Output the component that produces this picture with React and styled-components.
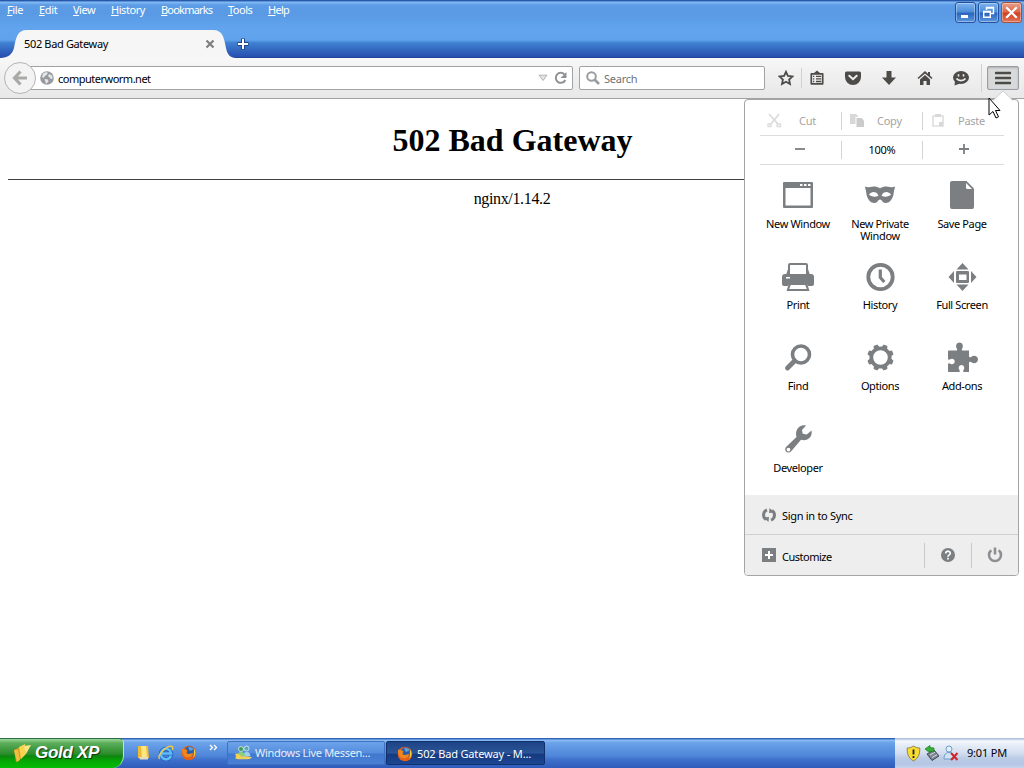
import React from 'react';
import styled, { createGlobalStyle } from 'styled-components';

const GlobalStyle = createGlobalStyle`
  * {
    box-sizing: border-box;
  }
  html, body {
    margin: 0;
    padding: 0;
    overflow: hidden;
  }
  svg {
    display: block;
    flex: none;
  }
`;

const Desktop = styled.div`
  position: relative;
  display: flex;
  flex-direction: column;
  width: 1024px;
  height: 768px;
  background: #fff;
  color: #000;
  font: 11px/13px 'Noto Sans', 'Open Sans', sans-serif;
  letter-spacing: -0.25px;
  white-space: nowrap;
  cursor: default;
`;

/* ---------- title bar and tabs ---------- */

const TitleBar = styled.header`
  display: flex;
  flex-direction: column;
  justify-content: space-between;
  height: 58px;
  background: linear-gradient(
    #1f4f9f 0, #2f65b5 1px, #86bdf6 2px, #5c9ce6 5px, #5a9ae4 14px,
    #62a5ee 30px, #60a2ec 40px, #3f7fd0 43px, #3a76ca 46px, #2d5cb8 53px, #2850ae 57px, #1c3c8c 58px
  );
`;

const TitleRow = styled.div`
  display: flex;
  justify-content: space-between;
  height: 24px;
`;

const MenuBar = styled.nav`
  display: flex;
  gap: 16px;
  padding: 3px 0 0 7px;
  color: #fff;
`;

const MenuItem = styled.div`
  width: ${({ $w }) => $w}px;
  letter-spacing: ${({ $ls }) => $ls}px;

  &::first-letter {
    text-decoration: underline;
  }
`;

const WindowButtons = styled.div`
  display: flex;
  gap: 2px;
  padding: 2px 2px 0 0;
`;

const WindowButton = styled.button`
  display: flex;
  align-items: center;
  justify-content: center;
  width: 21px;
  height: 21px;
  padding: 0;
  border: 1px solid ${({ $close }) => ($close ? '#a3503f' : '#25509c')};
  border-radius: 3px;
  box-shadow: inset 0 0 0 1px rgba(255, 255, 255, 0.35);
  background: ${({ $close }) => ($close
    ? 'linear-gradient(#e9a08c, #dd6a4c 45%, #cf4422 55%, #e0745a)'
    : 'linear-gradient(#7db3ee, #4f8fdc 45%, #2c66bd 55%, #5b97de)')};
`;

const TabStrip = styled.div`
  display: flex;
  height: 28px;
`;

const Tab = styled.div`
  position: relative;
  display: flex;
  align-items: center;
  justify-content: space-between;
  width: 236px;
  padding: 0 21px 0 24px;
`;

const TabShape = styled.svg`
  position: absolute;
  left: 0;
  top: 0;
`;

const TabTitle = styled.span`
  position: relative;
  padding-bottom: 2px;
  letter-spacing: -0.35px;
`;

const TabClose = styled.svg`
  position: relative;
`;

const NewTab = styled.div`
  padding: 8px 0 0 1px;
`;

/* ---------- toolbar ---------- */

const Toolbar = styled.div`
  display: flex;
  align-items: center;
  height: 41px;
  padding: 0 5px 1px 4px;
  border-bottom: 1px solid #a3a3a3;
  background: linear-gradient(#f8f8f8, #f1f0f0 40%, #e9e8e8);
`;

const BackButton = styled.div`
  display: flex;
  align-items: center;
  justify-content: center;
  width: 32px;
  height: 32px;
  margin-right: -7px;
  z-index: 1;
  border: 1px solid #b4b4b4;
  border-radius: 50%;
  background: #f3f3f3;
`;

const Field = styled.div`
  display: flex;
  align-items: center;
  width: ${({ $w }) => $w}px;
  height: 24px;
  margin-right: 6px;
  padding: ${({ $pad }) => $pad};
  border: 1px solid #a0a2a4;
  border-radius: 2px;
  background: #fff;
`;

const Address = styled.span`
  flex: 1;
  padding: 2px 0 0 4px;
  letter-spacing: -0.5px;
`;

const SearchHint = styled.span`
  padding: 2px 0 0 4px;
  color: #6f7275;
`;

const ToolbarButtons = styled.div`
  display: flex;
  align-items: center;
  margin-left: 6px;
`;

const ToolButton = styled.div`
  display: flex;
  justify-content: center;
  width: ${({ $w }) => $w || 36}px;
  margin-right: ${({ $right }) => $right || 0}px;
`;

const ToolDivider = styled.div`
  width: 1px;
  height: ${({ $h }) => $h}px;
  margin-left: ${({ $left }) => $left}px;
  background: #d0d0d0;
`;

const MenuButton = styled.div`
  display: flex;
  align-items: center;
  justify-content: center;
  width: 32px;
  height: 24px;
  margin-left: auto;
  border: 1px solid #9a9ea4;
  border-radius: 2px;
  box-shadow: inset 0 1px 2px rgba(0, 0, 0, 0.2);
  background: #d8d9db;
`;

/* ---------- page ---------- */

const Page = styled.main`
  flex: 1;
  padding: 0 8px;
  text-align: center;
  font: 16px/18px 'Liberation Serif', serif;
  letter-spacing: 0;
`;

const PageTitle = styled.h1`
  margin: 23px 0 20px 1px;
  font-size: 32px;
  line-height: 37px;
`;

const PageRule = styled.hr`
  margin: 0 0 10px;
  border: 0;
  border-top: 1px solid #404040;
`;

const Server = styled.div`
  letter-spacing: -0.35px;
`;

/* ---------- application menu ---------- */

const Panel = styled.aside`
  position: absolute;
  left: 744px;
  top: 99px;
  width: 275px;
  height: 477px;
  display: flex;
  flex-direction: column;
  border: 1px solid #a2a4a6;
  border-radius: 4px;
  background: #fff;
`;

const PanelArrow = styled.svg`
  position: absolute;
  left: 247px;
  top: -10px;
`;

const EditRows = styled.div`
  display: flex;
  flex-direction: column;
  margin: 7px 14px 0 15px;
`;

const EditRow = styled.div`
  display: grid;
  grid-template-columns: 81px 81px 82px;
  align-items: center;
  height: 29px;
  border-bottom: 1px solid #dcdcdc;
`;

const EditCell = styled.div`
  display: flex;
  align-items: center;
  justify-content: ${({ $center }) => ($center ? 'center' : 'flex-start')};
  gap: ${({ $gap }) => $gap || 0}px;
  height: 18px;
  padding: 0 0 2px ${({ $left }) => $left || 0}px;
  border-left: 1px solid ${({ $first }) => ($first ? 'transparent' : '#d4d4d4')};
  color: ${({ $off }) => ($off ? '#a4a4a4' : '#000')};
`;

const Actions = styled.div`
  display: grid;
  flex: none;
  grid-template-columns: repeat(3, 82px);
  grid-auto-rows: 81.2px;
  height: 316px;
  margin: 14px 0 0 12px;
`;

const Action = styled.div`
  display: flex;
  flex-direction: column;
  align-items: center;
  gap: 7px;
  text-align: center;
  line-height: 12px;
  letter-spacing: -0.38px;
  white-space: pre;
`;

const Footer = styled.div`
  display: flex;
  flex: none;
  align-items: center;
  height: 40px;
  padding-left: 17px;
  background: #eee;
  border-bottom: ${({ $line }) => ($line ? '1px solid #d0d0d0' : '0')};
  border-radius: ${({ $line }) => ($line ? '0' : '0 0 3px 3px')};
`;

const FooterLabel = styled.span`
  flex: 1;
  padding: 2px 0 0 6px;
  letter-spacing: ${({ $ls }) => $ls || -0.3}px;
`;

const FooterButton = styled.div`
  display: flex;
  align-items: center;
  justify-content: center;
  width: 47px;
  height: 25px;
  border-left: 1px solid #c8c8c8;
`;

/* ---------- task bar ---------- */

const TaskBar = styled.footer`
  display: flex;
  height: 30px;
  background: linear-gradient(
    #2a58a8 0, #3a6fc4 1px, #8cbcf2 2px, #6aa2ea 5px, #5a92e0 12px, #4f86d9 18px, #3c6fcb 22px, #2f5cba 30px
  );
`;

const StartButton = styled.div`
  display: flex;
  align-items: center;
  gap: 3px;
  width: 124px;
  padding: 0 0 2px 13px;
  border-top: 1px solid #2d6a4a;
  border-right: 1px solid #c0e4c4;
  border-radius: 0 5px 12px 0;
  background: linear-gradient(#9ad79a 0, #5dae5c 4px, #3f9a40 10px, #2c8c2c 15px, #0d860d 17px, #05a805 22px, #04bc04 100%);
  color: #fff;
  font: italic bold 17px/26px 'Liberation Sans', Arial, sans-serif;
  letter-spacing: -0.3px;
  text-shadow: 1px 1px 1px rgba(0, 0, 0, 0.6);
`;

const QuickLaunch = styled.div`
  display: flex;
  align-items: center;
  gap: 7px;
  width: 103px;
  padding-left: 11px;
`;

const Chevrons = styled.svg`
  margin: -11px 0 0 5px;
`;

const TaskButton = styled.div`
  display: flex;
  align-items: center;
  gap: ${({ $active }) => ($active ? 4 : 3)}px;
  width: ${({ $active }) => ($active ? 159 : 158)}px;
  height: 24px;
  margin: 3px 1px 0 0;
  padding: ${({ $active }) => ($active ? '1px 0 0 10px' : '0 0 1px 7px')};
  border: 1px solid ${({ $active }) => ($active ? '#12306e' : '#3f71c2')};
  border-radius: 2px;
  color: ${({ $active }) => ($active ? '#fff' : '#e6effb')};
  letter-spacing: ${({ $active }) => ($active ? -0.15 : -0.3)}px;
  background: ${({ $active }) => ($active
    ? 'linear-gradient(#1d4385, #2a5598 50%, #153a80 56%, #1c4691)'
    : 'linear-gradient(#6da3ea, #568ddc 48%, #4079cf 56%, #4a80d4)')};
`;

const Tray = styled.div`
  display: flex;
  align-items: center;
  gap: 3px;
  width: 129px;
  margin-left: auto;
  padding: 0 0 0 11px;
  background: linear-gradient(#9fb6d8 0, #f4f7fc 3px, #e4ebf6 8px, #d3def0 15px, #bccce6 20px, #b4c6e4 26px, #c6d4ec 30px);
`;

const Clock = styled.span`
  margin: 0 0 1px 5px;
  letter-spacing: -0.2px;
`;

const Pointer = styled.svg`
  position: absolute;
  left: 988px;
  top: 97px;
`;

/* ---------- icons ---------- */

const GREY = '#7c7f82';
const DARK = '#4d4b48';

const Icon = ({ w = 32, h = 32, children }) => (
  <svg width={w} height={h} viewBox={`0 0 ${w} ${h}`} fill="none">
    {children}
  </svg>
);

const NewWindowIcon = () => (
  <Icon>
    <path fill={GREY} fillRule="evenodd" d="M2 3h28a1 1 0 0 1 1 1v24a1 1 0 0 1-1 1H2a1 1 0 0 1-1-1V4a1 1 0 0 1 1-1zM3.500 9v17.500h25V9z" />
    <path fill="#fff" d="M18 5h2.500v2H18zM22 5h2.500v2H22zM26 5h2.500v2H26z" />
  </Icon>
);

const MaskIcon = () => (
  <Icon>
    <path
      fill={GREY}
      fillRule="evenodd"
      d="M1 7.500c2 .8 3.500.9 5 .5 3.500-1 7-.6 10 1.300 3-1.900 6.500-2.300 10-1.300 1.500.4 3 .3 5-.5-.2 2-1 3.500-1.200 6-.5 5.500-3.600 10.500-8.300 10.500-3 0-3.700-3.500-5.500-3.500S13.500 24 10.500 24C5.800 24 2.700 19 2.200 13.500 2 11 1.200 9.500 1 7.500zM5 15.500c2 2.300 6.500 2.800 9.500 1.200-1-2.600-3-3.700-5-3.700-1.800 0-3.300 1-4.500 2.500zM27 15.500c-1.200-1.500-2.700-2.500-4.500-2.500-2 0-4 1.100-5 3.700 3 1.600 7.500 1.100 9.500-1.200z"
    />
  </Icon>
);

const SavePageIcon = () => (
  <Icon>
    <path fill={GREY} d="M6 2h14.500L28 9.500V28a2 2 0 0 1-2 2H6a2 2 0 0 1-2-2V4a2 2 0 0 1 2-2z" />
    <path fill="#fff" d="M20 4l6 6h-4.500a1.500 1.500 0 0 1-1.500-1.500z" />
  </Icon>
);

const PrintIcon = () => (
  <Icon>
    <path fill={GREY} d="M3 14h26a3 3 0 0 1 3 3v7a2 2 0 0 1-2 2H2a2 2 0 0 1-2-2v-7a3 3 0 0 1 3-3z" />
    <path fill={GREY} fillRule="evenodd" d="M8 3h16a2 2 0 0 1 2 2v4l2 6H4l2-6V5a2 2 0 0 1 2-2zM8 5v9.500h16V5z" />
    <path fill="#fff" d="M4 17h4v1.500H4zM7 24h18l2 4.500H5z" />
    <path fill={GREY} fillRule="evenodd" d="M7 23h18l2.500 8h-23zM8.800 25l-1.600 4h17.600l-1.600-4z" />
  </Icon>
);

const HistoryIcon = () => (
  <Icon>
    <circle cx="16.500" cy="17" r="12.200" stroke={GREY} strokeWidth="3.800" />
    <path d="M16.300 9.500v8l4 4.500" stroke={GREY} strokeWidth="3.200" />
  </Icon>
);

const FullScreenIcon = () => (
  <Icon>
    <path fill={GREY} d="M16.500 3l6 6.500h-12zM16.500 31l6-6.500h-12zM2.500 17l5.500-6v12zM30.500 17l-5.500-6v12z" />
    <path fill={GREY} fillRule="evenodd" d="M11 11h11a1 1 0 0 1 1 1v10a1 1 0 0 1-1 1H11a1 1 0 0 1-1-1V12a1 1 0 0 1 1-1zM13 14.500V20h7.500v-5.500z" />
  </Icon>
);

const FindIcon = () => (
  <Icon>
    <circle cx="19" cy="13.500" r="8.500" stroke={GREY} strokeWidth="3.600" />
    <path d="M12.500 20l-7 7" stroke={GREY} strokeWidth="4.800" strokeLinecap="round" />
  </Icon>
);

const OptionsIcon = () => (
  <Icon>
    <circle cx="16.500" cy="16.500" r="9.200" stroke={GREY} strokeWidth="3.800" />
    {[22.5, 67.5, 112.5, 157.5, 202.5, 247.5, 292.5, 337.5].map((a) => (
      <path key={a} d="M14.500 6l.5-2h3l.5 2z" fill={GREY} stroke={GREY} strokeWidth="1.500" strokeLinejoin="round" transform={`rotate(${a} 16.500 16.500)`} />
    ))}
  </Icon>
);

const AddonsIcon = () => (
  <Icon>
    <path
      fill={GREY}
      d="M3 9.500h7.500c1 0 .8-1.400.2-2.200C9.300 5 10.500 1.500 13.500 1.500s4.200 3.500 2.800 5.800c-.6.800-.8 2.200.2 2.200H23v5.500c0 1.500 1.500 1.600 2.500.7 2.300-1.900 6.500-.7 6.500 2.800s-4.200 4.700-6.500 2.800c-1-.9-2.500-.8-2.500.7v9h-5c-1.200 0-1-1.500-.3-2.300 1.300-1.700.3-4.700-2.200-4.700s-3.500 3-2.200 4.700c.7.800.9 2.300-.3 2.300H3c-.6 0-1-.4-1-1v-7c0-1 1.500-1 2.300-.3C6 24 8.700 23 8.700 20.500S6 17 4.300 18.300C3.500 19 2 19 2 18v-7.500c0-.6.4-1 1-1z"
    />
  </Icon>
);

const DeveloperIcon = () => (
  <Icon>
    <path
      fill={GREY}
      fillRule="evenodd"
      d="M24 2.500l-4 4.500.7 3.700 4 .8 4.800-4c1.300 6.500-4 11-10.500 9.300L9 28.500c-3.500 3-7.500-.8-5-4.500L14.500 14C12.500 7 17.500 1 24 2.500zM6.500 24.700a1.900 1.900 0 1 0 0 3.800 1.900 1.900 0 0 0 0-3.800z"
    />
  </Icon>
);

const TOOL_ICONS = {
  star: <path d="M8 1.800l1.900 4.100 4.500.5-3.300 3.100.9 4.500L8 11.800 4 14l.9-4.500L1.600 6.400l4.500-.5z" stroke={DARK} strokeWidth="1.800" />,
  list: (
    <>
      <path d="M2.300 3.900h11.400v9.900H2.300z" stroke={DARK} strokeWidth="1.700" strokeLinejoin="round" />
      <path fill={DARK} d="M4.500 3.500L8 .5l3.500 3z" />
      <path d="M4 6.300h1.300M7 6.300h5.200M4 8.900h1.300M7 8.900h5.200M4 11.500h1.300M7 11.500h5.200" stroke={DARK} strokeWidth="1.300" />
    </>
  ),
  pocket: (
    <>
      <path fill={DARK} d="M1.500 1.500h13a1.500 1.500 0 0 1 1.500 1.500v4a8 8 0 0 1-16 0V3a1.500 1.500 0 0 1 1.500-1.500z" />
      <path d="M4.300 5.700L8 9.200l3.700-3.500" stroke="#f0f0f0" strokeWidth="2" strokeLinecap="round" />
    </>
  ),
  download: <path fill={DARK} d="M5.500 1h5v6.500H15L8 15 1 7.500h4.500z" />,
  home: <path fill={DARK} d="M8 1l3 2.800V2h2v3.600L15.500 8l-1 1L8 3.500 1.500 9l-1-1zM8 5l5 4.500V15H9.500v-4h-3v4H3V9.500z" />,
  chat: (
    <>
      <ellipse cx="8" cy="7.500" rx="8" ry="6.500" fill={DARK} />
      <path fill={DARK} d="M2 11l-.5 4.500L7 13.500z" />
      <path d="M3.500 8.500c2 2.800 7 2.800 9 0" stroke="#f0f0f0" strokeWidth="1.700" />
      <path d="M5.500 4.300v2.200M10.500 4.300v2.200" stroke="#f0f0f0" strokeWidth="1.600" />
    </>
  ),
};

const FirefoxIcon = () => (
  <Icon w={16} h={16}>
    <circle cx="8" cy="8" r="7.300" fill="#e2601c" />
    <circle cx="8.500" cy="6.500" r="5" fill="#2a5ba8" />
    <path d="M7 2.500c2-1.300 5 0 5.500 2L9 6z" fill="#5ba6e0" />
    <path d="M1 4c1-.5 2 .5 4 .5 1.500 0 2 1 1 2-1 .8 0 2.500 1.500 2.500 2 0 3-1 4.500-1 0 3-3 5-6 4.300C2.500 11.500 1 8 1 4z" fill="#f0861e" />
    <path d="M13 3.500c2.200 3 1.800 7-.8 9 .9-2 .8-3.500.6-5z" fill="#f9cf3a" />
  </Icon>
);

const MessengerIcon = () => (
  <Icon w={17} h={16}>
    <circle cx="6" cy="4" r="2.500" fill="#3f9a5c" stroke="#d5eeda" strokeWidth=".8" />
    <circle cx="11.500" cy="3.500" r="2.500" fill="#5ba8b8" stroke="#dceffa" strokeWidth=".8" />
    <path d="M8 12c0-4 2-5 4-5s3 1.500 3.500 4z" fill="#9fd0f0" />
    <path d="M1.500 12c0-3.500 2.500-5 4.500-5s4 2 4.500 4z" fill="#8ad07c" />
    <path d="M0 9c3-2 5 2 8 2.500 3 .4 6-.5 9 1-3 2.500-6 1.500-9 1.700-3 .2-5 .3-8-1 1.500-1.200 1-3 0-4.200z" fill="#f3cf55" />
  </Icon>
);

const MENUS = [
  { name: 'File', w: 16, ls: -0.35 },
  { name: 'Edit', w: 18, ls: -0.35 },
  { name: 'View', w: 22, ls: -0.5 },
  { name: 'History', w: 34, ls: -0.45 },
  { name: 'Bookmarks', w: 51, ls: -0.8 },
  { name: 'Tools', w: 24, ls: -0.5 },
  { name: 'Help', w: 22, ls: -0.7 },
];

const ACTIONS = [
  { label: 'New Window', icon: <NewWindowIcon /> },
  { label: 'New Private\nWindow', icon: <MaskIcon /> },
  { label: 'Save Page', icon: <SavePageIcon /> },
  { label: 'Print', icon: <PrintIcon /> },
  { label: 'History', icon: <HistoryIcon /> },
  { label: 'Full Screen', icon: <FullScreenIcon /> },
  { label: 'Find', icon: <FindIcon /> },
  { label: 'Options', icon: <OptionsIcon /> },
  { label: 'Add-ons', icon: <AddonsIcon /> },
  { label: 'Developer', icon: <DeveloperIcon /> },
];

const Header = () => (
  <TitleBar>
    <TitleRow>
      <MenuBar>
        {MENUS.map(({ name, w, ls }) => <MenuItem key={name} $w={w} $ls={ls}>{name}</MenuItem>)}
      </MenuBar>
      <WindowButtons>
        <WindowButton aria-label="Minimize">
          <Icon w={15} h={15}><path fill="#fff" d="M3 10h7v3H3z" /></Icon>
        </WindowButton>
        <WindowButton aria-label="Restore">
          <Icon w={15} h={15}>
            <path d="M5.500 5V2.500h7v6H10M5 3h8" stroke="#fff" strokeWidth="1.400" />
            <path d="M2.700 6.500h6.600v5.800H2.700zM2 7h8" stroke="#fff" strokeWidth="1.400" />
          </Icon>
        </WindowButton>
        <WindowButton $close aria-label="Close">
          <Icon w={15} h={15}><path d="M3 3l9 9M12 3l-9 9" stroke="#fff" strokeWidth="2.200" strokeLinecap="square" /></Icon>
        </WindowButton>
      </WindowButtons>
    </TitleRow>
    <TabStrip>
      <Tab>
        <TabShape width="236" height="28" viewBox="0 0 236 28">
          <path fill="#f6f6f6" d="M0 28c8-.5 12-3 14-10C16 8 17 0 27 0h186c10 0 11 8 13 18 1.500 7 4 9.500 10 10z" />
        </TabShape>
        <TabTitle>502 Bad Gateway</TabTitle>
        <TabClose width="10" height="10" viewBox="0 0 10 10">
          <path d="M1.500 1.500l7 7M8.500 1.500l-7 7" stroke="#7f7f7f" strokeWidth="2.200" />
        </TabClose>
      </Tab>
      <NewTab>
        <Icon w={12} h={12}>
          <path d="M6 .5v11M.5 6h11" stroke="#1f4488" strokeWidth="4" />
          <path d="M6 1v10M1 6h10" stroke="#fff" strokeWidth="2" />
        </Icon>
      </NewTab>
    </TabStrip>
  </TitleBar>
);

const NavBar = () => (
  <Toolbar>
    <BackButton>
      <Icon w={16} h={16}><path d="M8.500 1.500L2.500 8l6 6.500M3 8h12" stroke="#a9a9a6" strokeWidth="3.200" /></Icon>
    </BackButton>
    <Field $w={544} $pad="0 4px 0 10px">
      <Icon w={14} h={14}>
        <circle cx="7" cy="7" r="6.800" fill="#969a9e" />
        <path fill="#e4e5e6" d="M3 2.500l3-1.500 2 1-1.500 2L5 5 3.500 7 2 6zM9 3l3 1.500.8 3L11 8 9.500 6.500 8 5zM4.500 8L8 8.500l.5 2L6 13z" />
      </Icon>
      <Address>computerworm.net</Address>
      <Icon w={10} h={8}><path d="M1 1.200h8L5 6.500z" fill="#e4e4e4" stroke="#b2b2b2" /></Icon>
      <Icon w={20} h={14}>
        <path d="M16.500 3.500A5 5 0 1 0 17.300 9" stroke="#8f9396" strokeWidth="2" />
        <path d="M18.500 1v6h-6z" fill="#8f9396" />
      </Icon>
    </Field>
    <Field $w={186} $pad="0 0 0 6px">
      <Icon w={14} h={14}>
        <circle cx="5.500" cy="5.500" r="4.300" stroke="#9a9da0" strokeWidth="2" />
        <path d="M8.500 8.500L13 13" stroke="#9a9da0" strokeWidth="2.600" />
      </Icon>
      <SearchHint>Search</SearchHint>
    </Field>
    <ToolbarButtons>
      <ToolButton $w={18}><Icon w={16} h={16}>{TOOL_ICONS.star}</Icon></ToolButton>
      <ToolDivider $h={20} $left={6} />
      <ToolButton $w={30} $right={3}><Icon w={16} h={16}>{TOOL_ICONS.list}</Icon></ToolButton>
      {['pocket', 'download', 'home', 'chat'].map((name) => (
        <ToolButton key={name}><Icon w={16} h={16}>{TOOL_ICONS[name]}</Icon></ToolButton>
      ))}
      <ToolDivider $h={28} $left={2} />
    </ToolbarButtons>
    <MenuButton>
      <Icon w={16} h={14}><path d="M1 2h14M1 7h14M1 12h14" stroke={DARK} strokeWidth="2.600" strokeLinecap="round" /></Icon>
    </MenuButton>
  </Toolbar>
);

const AppMenu = () => (
  <Panel>
    <PanelArrow width="22" height="11" viewBox="0 0 22 11">
      <path d="M1 10.500l10-9.500 10 9.500" fill="#fff" stroke="#c4c4c4" strokeWidth=".8" />
      <path d="M2 11h18v-1H2z" fill="#fff" />
    </PanelArrow>
    <EditRows>
      <EditRow>
        <EditCell $first $off $left={6} $gap={17}>
          <Icon w={15} h={15}>
            <path d="M2 1l9 10M12 1L4 11" stroke="#dcdcdc" strokeWidth="1.800" />
            <path d="M1 11h3v2.500H1zM10 11h3.500v2.500H10z" stroke="#dcdcdc" strokeWidth="1.300" />
          </Icon>
          Cut
        </EditCell>
        <EditCell $off $left={8} $gap={13}>
          <Icon w={14} h={14}><path fill="#d8d8d8" d="M0 1h6l2 2v1H5.500v7H0z" /><path fill="#cbcbcb" d="M6.500 5h5l2.500 2.500V14H6.500z" /></Icon>
          Copy
        </EditCell>
        <EditCell $off $left={9} $gap={14}>
          <Icon w={12} h={14}><path d="M1 3h10v10H1z" stroke="#dedede" strokeWidth="1.600" /><path fill="#d8d8d8" d="M3 1h6v3H3zM7 9h4v4H7z" /></Icon>
          Paste
        </EditCell>
      </EditRow>
      <EditRow>
        <EditCell $first $center><Icon w={12} h={10}><path d="M0 5h10" stroke={GREY} strokeWidth="1.800" /></Icon></EditCell>
        <EditCell $center>100%</EditCell>
        <EditCell $center><Icon w={10} h={10}><path d="M0 5h10M5 0v10" stroke={GREY} strokeWidth="1.800" /></Icon></EditCell>
      </EditRow>
    </EditRows>
    <Actions>
      {ACTIONS.map(({ label, icon }) => (
        <Action key={label}>{icon}{label}</Action>
      ))}
    </Actions>
    <Footer $line>
      <Icon w={14} h={14}>
        <path d="M5 1.800A5.500 5.500 0 0 0 4 11.500M9 12.200A5.500 5.500 0 0 0 10 2.500" stroke={GREY} strokeWidth="3" />
        <path fill={GREY} d="M1.500 9.500L7 9l-.5 5zM12.500 4.500L7 5l.5-5z" />
      </Icon>
      <FooterLabel>Sign in to Sync</FooterLabel>
    </Footer>
    <Footer>
      <Icon w={14} h={14}><path fill={GREY} d="M0 0h14v14H0z" /><path d="M7 3v8M3 7h8" stroke="#fff" strokeWidth="2" /></Icon>
      <FooterLabel $ls={-0.5}>Customize</FooterLabel>
      <FooterButton>
        <Icon w={14} h={14}>
          <circle cx="7" cy="7" r="7" fill={GREY} />
          <path d="M4.700 5.400c0-3 4.800-2.800 4.600 0C9.200 7 7 6.800 7 8.700M7 9.800v1.800" stroke="#fff" strokeWidth="1.700" />
        </Icon>
      </FooterButton>
      <FooterButton>
        <Icon w={16} h={16}><path d="M4.300 3.300a6 6 0 1 0 7.400 0" stroke="#8d8f92" strokeWidth="2.600" /><path d="M8 .5v7" stroke="#8d8f92" strokeWidth="2.600" /></Icon>
      </FooterButton>
    </Footer>
  </Panel>
);

const Bottom = () => (
  <TaskBar>
    <StartButton>
      <Icon w={19} h={20}>
        <path d="M1 7l6-3 2 11-6 4z" fill="#d99e25" />
        <path d="M6 4l6-3 1 10-5 5z" fill="#f7d44d" />
        <path d="M11 3l7-1-5 9z" fill="#fbe68a" />
        <path d="M1 7l4 0 2 10-3 2z" fill="#f0bd42" />
      </Icon>
      Gold XP
    </StartButton>
    <QuickLaunch>
      <Icon w={16} h={16}>
        <path d="M3 1h10l1 12H3z" fill="#f0bc38" />
        <path d="M6 1h5l1 11H7z" fill="#ffe680" />
        <path d="M4 12h9v2.500H5z" fill="#e8dcc0" />
      </Icon>
      <Icon w={16} h={16}>
        <path d="M13 10.500A5.200 5.200 0 1 1 13.200 8.500H4" stroke="#1c62b8" strokeWidth="4" />
        <path d="M13 10.500A5.200 5.200 0 1 1 13.200 8.500H4" stroke="#62bcf8" strokeWidth="2.600" />
        <path d="M1.500 14C-1 10 9 0 14 1.500c1.500.7.700 2.500 0 3.500" stroke="#f3c84a" strokeWidth="1.400" />
      </Icon>
      <FirefoxIcon />
      <Chevrons width="9" height="7" viewBox="0 0 9 7" fill="none">
        <path d="M1 1l2.500 2.500L1 6M5 1l2.500 2.500L5 6" stroke="#fff" strokeWidth="1.300" />
      </Chevrons>
    </QuickLaunch>
    <TaskButton><MessengerIcon />Windows Live Messen...</TaskButton>
    <TaskButton $active><FirefoxIcon />502 Bad Gateway - M...</TaskButton>
    <Tray>
      <Icon w={15} h={17}>
        <path d="M7.500 1c2 1.500 4 2 6.300 2 .2 6-1.300 10-6.300 13C2.500 13 1 9 1.200 3c2.300 0 4.300-.5 6.300-2z" fill="#f8dc32" stroke="#8b8655" />
        <path d="M7.500 4.500v5M7.500 11v2" stroke="#222" strokeWidth="1.800" />
      </Icon>
      <Icon w={16} h={16}>
        <path d="M3 9l7-4 5 6-7 4.500z" fill="#7b8490" stroke="#444b55" />
        <path d="M6 10l5-2.800M8 12.500l5-2.800" stroke="#d6dce2" />
        <path d="M1 4l5-3.500v2l4 .5v4L6 6v2z" fill="#35b034" stroke="#1d7c22" strokeWidth=".7" />
      </Icon>
      <Icon w={16} h={16}>
        <circle cx="6" cy="4" r="3" fill="#e4f0fa" stroke="#6e9cc6" />
        <path d="M1 14c0-4.500 2-6.500 5-6.500s5 2 5 6.500z" fill="#cfe3f5" stroke="#6e9cc6" />
        <path d="M8 8l6.500 7M14.500 8L8 15" stroke="#d2232a" strokeWidth="2" />
      </Icon>
      <Clock>9:01 PM</Clock>
    </Tray>
  </TaskBar>
);

const App = () => (
  <Desktop>
    <GlobalStyle />
    <Header />
    <NavBar />
    <Page>
      <PageTitle>502 Bad Gateway</PageTitle>
      <PageRule />
      <Server>nginx/1.14.2</Server>
    </Page>
    <Bottom />
    <AppMenu />
    <Pointer width="14" height="23" viewBox="0 0 14 23">
      <path d="M1 1v17l4-3.500 3 6.500 2.500-1.200-3-6.300H12z" fill="#fff" stroke="#000" />
    </Pointer>
  </Desktop>
);

export default App;
